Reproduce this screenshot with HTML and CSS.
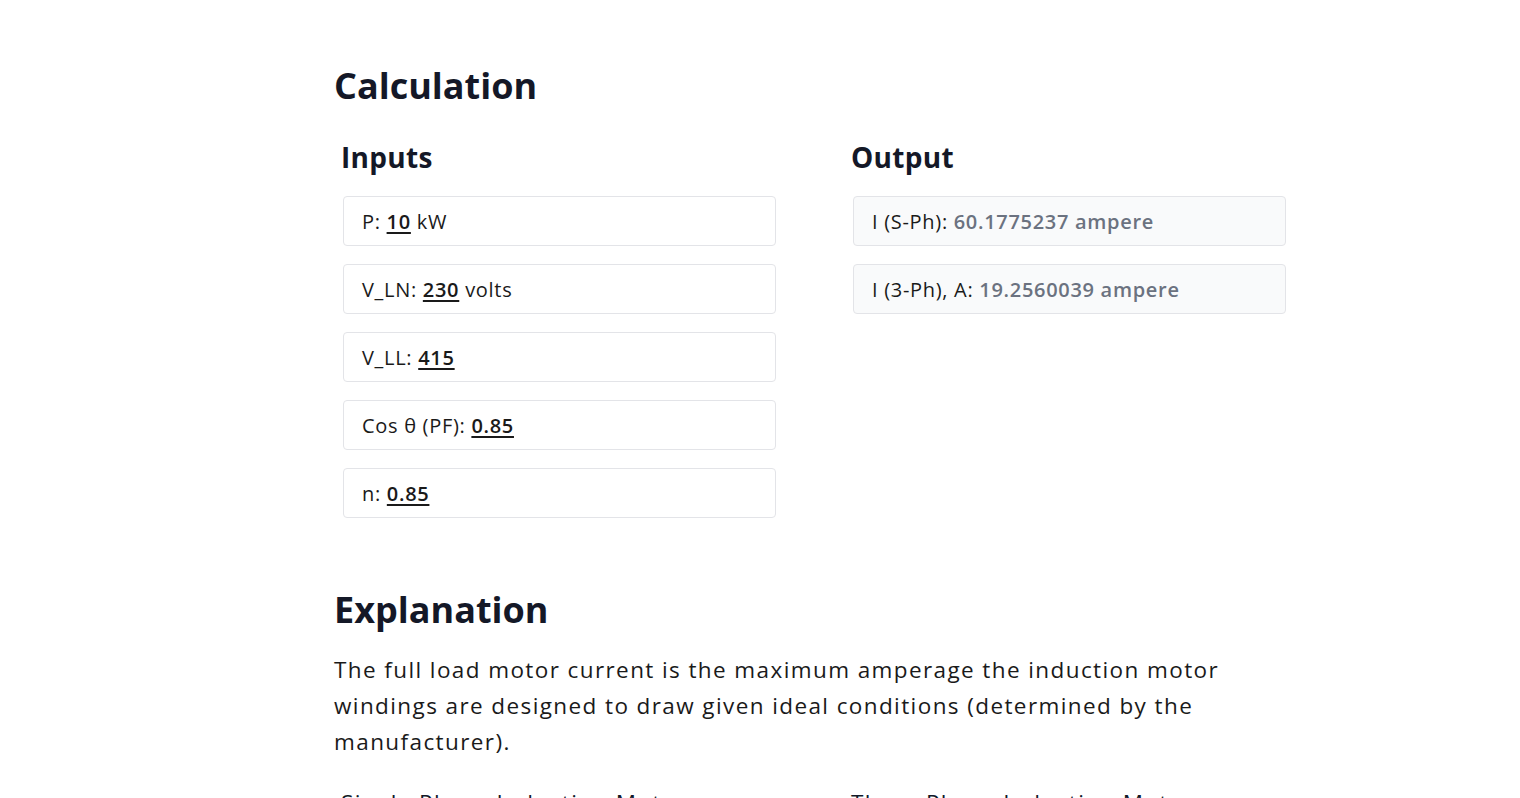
FILE: index.html
```html
<!DOCTYPE html>
<html>
<head>
<meta charset="utf-8">
<link rel="stylesheet" href="styles.css">
</head>
<body>
<main class="page">
  <section class="calc">
    <h1 class="h1">Calculation</h1>
    <div class="cols">
      <div class="col">
        <h2 class="h2">Inputs</h2>
        <div class="box">P: <span class="val">10</span> kW</div>
        <div class="box">V_LN: <span class="val">230</span> volts</div>
        <div class="box">V_LL: <span class="val">415</span></div>
        <div class="box">Cos θ (PF): <span class="val">0.85</span></div>
        <div class="box">n: <span class="val">0.85</span></div>
      </div>
      <div class="col">
        <h2 class="h2">Output</h2>
        <div class="box out">I (S-Ph): <span class="res">60.1775237 ampere</span></div>
        <div class="box out">I (3-Ph), A: <span class="res">19.2560039 ampere</span></div>
      </div>
    </div>
  </section>
  <section class="expl">
    <h1 class="h1">Explanation</h1>
    <p class="para">The full load motor current is the maximum amperage the induction motor windings are designed to draw given ideal conditions (determined by the manufacturer).</p>
    <div class="cols sub">
      <div class="col"><div class="subt">Single Phase Induction Motor</div></div>
      <div class="col"><div class="subt">Three Phase Induction Motor</div></div>
    </div>
  </section>
</main>
</body>
</html>
```

FILE: styles.css
```css
* { box-sizing: border-box; }
html, body { margin: 0; padding: 0; background: #fff; }
body {
  font-family: "Open Sans", "Liberation Sans", sans-serif;
  color: #111827;
  overflow: hidden;
}
.page {
  width: 952px;
  margin-left: 334px;
  padding-top: 60px;
}
.h1 {
  margin: 0;
  font-size: 36px;
  line-height: 52px;
  font-weight: 700;
  color: #141827;
}
.cols {
  display: flex;
}
.col {
  width: 500px;
  padding-left: 7px;
}
.col + .col { width: 452px; padding-left: 17px; }
.h2 {
  margin: 25px 0 19px;
  font-size: 28px;
  line-height: 40px;
  font-weight: 700;
  color: #141827;
  letter-spacing: 0.3px;
}
.box {
  width: 433px;
  height: 50px;
  margin-left: 2px;
  margin-bottom: 18px;
  border: 1px solid #e3e4e8;
  border-radius: 4px;
  padding: 0 18px;
  display: flex;
  align-items: center;
  font-size: 20px;
  letter-spacing: 0.7px;
  color: #1a1a1a;
  white-space: pre;
}
.val {
  font-weight: 600;
  text-decoration: underline;
  text-underline-offset: 3px;
  text-decoration-thickness: 1.5px;
}
.out { background: #f9fafb; }
.res { color: #6b7280; font-weight: 600; }
.expl { margin-top: 48px; }
.para {
  margin: 16px 0 0;
  font-size: 22.5px;
  line-height: 36px;
  letter-spacing: 1.4px;
  color: #1a1a1a;
  max-width: 900px;
}
.sub { margin-top: 25px; }
.subt { font-size: 22.5px; line-height: 36px; letter-spacing: 1.4px; }
```
